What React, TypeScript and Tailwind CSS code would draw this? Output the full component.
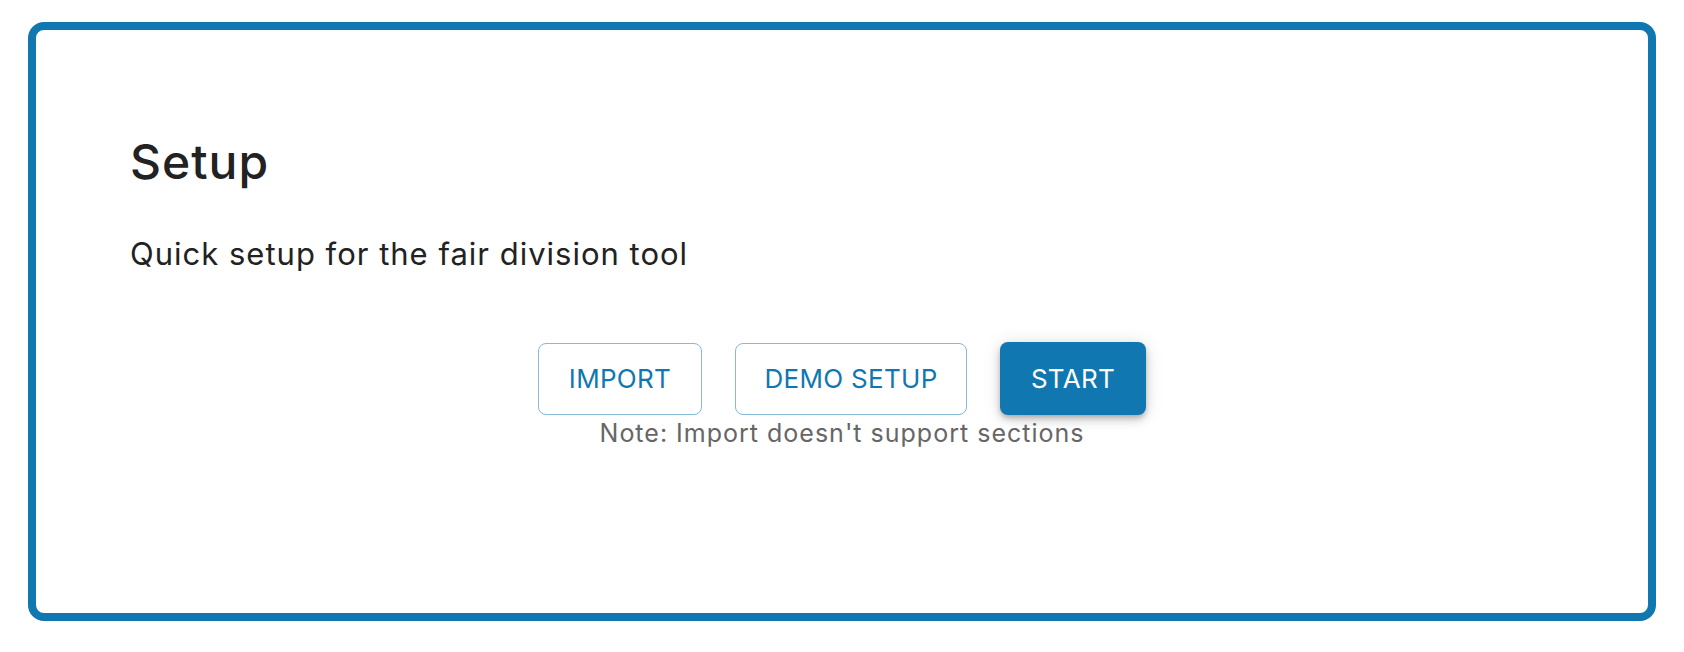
const SetupCard = () => {
    return (
        <div className="h-[599px] rounded-[16px] border-8 border-[#1077b1] bg-white pl-[94px] pr-[94px] pt-[103px]">
            <h1 className="text-[48px] leading-[58px] font-medium text-[#222222] tracking-[1px]">Setup</h1>
            <p className="mt-[44px] text-[31px] leading-[37px] tracking-[1px] text-[#222222]">Quick setup for the fair division tool</p>

            <div className="mt-[70px] flex flex-col items-center">
                <div className="flex items-center gap-[33px]">
                    <button className="flex h-[72px] w-[164px] items-center justify-center rounded-[8px] border border-[#87b9d8] text-[26px] tracking-[0.3px] text-[#1077b1]">
                        IMPORT
                    </button>
                    <button className="flex h-[72px] w-[232px] items-center justify-center rounded-[8px] border border-[#87b9d8] text-[26px] tracking-[0.3px] text-[#1077b1]">
                        DEMO SETUP
                    </button>
                    <button className="flex h-[73px] w-[146px] items-center justify-center rounded-[8px] bg-[#1077b1] text-[26px] tracking-[0.3px] text-white shadow-[0_3px_5px_-1px_rgba(0,0,0,0.2),0_5px_10px_0_rgba(0,0,0,0.14),0_1px_18px_0_rgba(0,0,0,0.12)]">
                        START
                    </button>
                </div>
                <p className="mt-[3px] text-[25px] leading-[30px] tracking-[1px] text-[#666666]">Note: Import doesn't support sections</p>
            </div>
        </div>
    );
};

export default function App() {
    return (
        <div className="min-h-[652px] bg-white px-[28px] pt-[22px] pb-[31px] font-['Inter',_'Noto_Sans',_sans-serif]">
            <SetupCard />
        </div>
    );
}
